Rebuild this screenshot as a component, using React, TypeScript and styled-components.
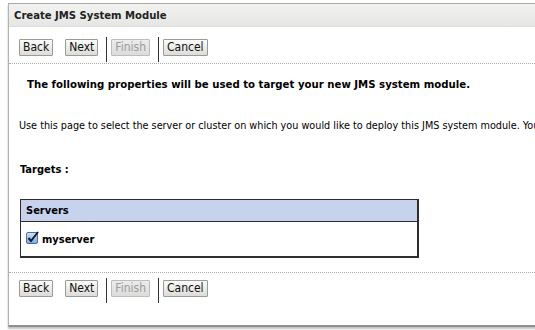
import React from 'react'
import styled, { createGlobalStyle } from 'styled-components'

const GlobalStyle = createGlobalStyle`
	html, body {
		margin: 0;
		padding: 0;
		background: #ffffff;
	}
	body {
		font-family: 'DejaVu Sans Condensed', 'DejaVu Sans', Verdana, sans-serif;
		color: #000;
		overflow: hidden;
	}
`

const Page = styled.div`
	width: 535px;
	height: 330px;
	padding: 3px 0 0 8px;
	box-sizing: border-box;
	overflow: hidden;
`

const Panel = styled.div`
	width: 560px;
	border-top: 1px solid #a9a9a9;
	border-left: 1px solid #b4b4b4;
	border-bottom: 2px solid #8f8f8f;
	box-shadow: 0 2px 2px rgba(0, 0, 0, 0.25);
	background: #fff;
`

const Header = styled.div`
	height: 22px;
	display: flex;
	align-items: center;
	padding-left: 5px;
	background: linear-gradient(#f2f2f0, #e6e6e4);
	border-bottom: 1px solid #dcdcdc;
	font-size: 11.2px;
	font-weight: bold;
	color: #222;
`

const Toolbar = styled.div<{ $top: number; $bottom: number }>`
	display: flex;
	align-items: flex-start;
	padding: ${(p) => p.$top}px 0 ${(p) => p.$bottom}px 10px;
	border-bottom: ${(p) => (p.$bottom ? '1px dotted #aaa' : 'none')};
	border-top: ${(p) => (p.$bottom ? 'none' : '1px dotted #aaa')};
`

const Button = styled.button<{ $disabled?: boolean; $gap: number }>`
	font-family: 'DejaVu Sans Condensed', 'DejaVu Sans', sans-serif;
	font-size: 12px;
	height: 17px;
	margin-top: 2px;
	padding: 0 3px;
	margin-right: ${(p) => p.$gap}px;
	border: 1px solid ${(p) => (p.$disabled ? '#bcbcbc' : '#9a9a9a')};
	border-radius: 1px;
	background: ${(p) => (p.$disabled ? 'linear-gradient(#ececea, #dcdcda)' : 'linear-gradient(#fbfbf9, #dcdcd8)')};
	color: ${(p) => (p.$disabled ? '#9c9c9c' : '#111')};
	line-height: 15px;
	cursor: default;
`

const Separator = styled.div`
	width: 1px;
	height: 25px;
	background: #333;
	margin-right: 4px;
`

const Content = styled.div`
	padding: 0 0 0 10px;
`

const Lead = styled.div`
	font-size: 11.3px;
	font-weight: bold;
	padding: 14px 0 0 8px;
	height: 20px;
`

const Help = styled.div`
	font-size: 10.75px;
	padding-top: 21px;
	white-space: nowrap;
	height: 26px;
`

const Label = styled.div`
	font-size: 11px;
	font-weight: bold;
	padding: 18px 0 0 1px;
	height: 22px;
`

const TableBox = styled.div`
	width: 396px;
	margin: 14px 0 14px 1px;
	border: 1px solid #2e2e2e;
	border-width: 1px 2px 2px 1px;
`

const TableHead = styled.div`
	height: 21px;
	display: flex;
	align-items: center;
	padding-left: 5px;
	background: #c7d2ec;
	border-bottom: 1px solid #2e2e2e;
	font-size: 11px;
	font-weight: bold;
`

const TableRow = styled.div`
	height: 34px;
	display: flex;
	align-items: center;
	gap: 3px;
	padding-left: 5px;
	font-size: 11px;
	font-weight: bold;
`

const Check = styled.span`
	display: inline-flex;
	width: 13px;
	height: 13px;
	margin-top: -4px;
`

const Footer = styled.div`
	height: 22px;
`

const Buttons: React.FC<{ top: number; bottom: number }> = ({ top, bottom }) => (
	<Toolbar $top={top} $bottom={bottom}>
		<Button $gap={12}>Back</Button>
		<Button $gap={8}>Next</Button>
		<Separator />
		<Button $disabled $gap={8}>Finish</Button>
		<Separator />
		<Button $gap={0}>Cancel</Button>
	</Toolbar>
)

const App: React.FC = () => {
	return (
		<>
			<GlobalStyle />
			<Page>
				<Panel>
					<Header>Create JMS System Module</Header>
					<Buttons top={10} bottom={1} />
					<Content>
						<Lead>The following properties will be used to target your new JMS system module.</Lead>
						<Help>
							Use this page to select the server or cluster on which you would like to deploy this JMS system
							module. You can also choose to target this module later.
						</Help>
						<Label>Targets :</Label>
						<TableBox>
							<TableHead>Servers</TableHead>
							<TableRow>
								<Check>
									<svg width="13" height="13" viewBox="0 0 13 13">
										<defs>
											<linearGradient id="cb" x1="0" y1="0" x2="0" y2="1">
												<stop offset="0" stopColor="#d3e3f7" />
												<stop offset="1" stopColor="#7fa6dc" />
											</linearGradient>
										</defs>
										<rect x="0.5" y="1.5" width="11" height="11" rx="1.5" fill="url(#cb)" stroke="#4c6f9f" />
										<path d="M2.5 7 L5 10 L12 1" fill="none" stroke="#0d1b33" strokeWidth="2" />
									</svg>
								</Check>
								myserver
							</TableRow>
						</TableBox>
					</Content>
					<Buttons top={5} bottom={0} />
					<Footer />
				</Panel>
			</Page>
		</>
	)
}

export default App
